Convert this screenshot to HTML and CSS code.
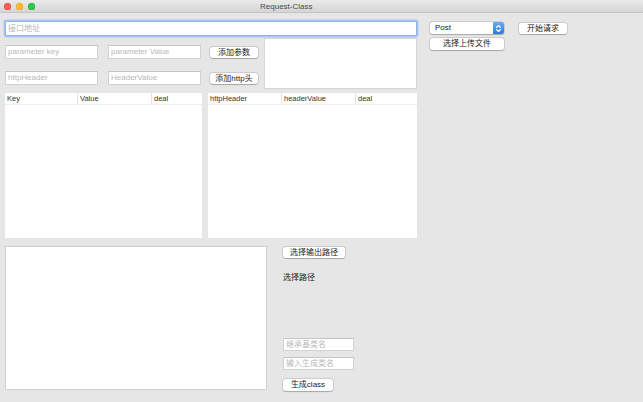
FILE: index.html
```html
<!DOCTYPE html>
<html lang="zh">
<head>
<meta charset="utf-8">
<title>Request-Class</title>
<link rel="stylesheet" href="styles.css">
</head>
<body>
<div class="window">
  <div class="titlebar">
    <div class="lights">
      <span class="light red"></span>
      <span class="light yellow"></span>
      <span class="light green"></span>
    </div>
    <div class="title">Request-Class</div>
  </div>
  <div class="content">
    <div class="left">
      <div class="url"><span class="ph">接口地址</span></div>
      <div class="form">
        <div class="field f-key"><span class="ph">parameter key</span></div>
        <div class="field f-val"><span class="ph">parameter Value</span></div>
        <div class="btn b-add">添加参数</div>
        <div class="textbox tb-top"></div>
        <div class="field f-hkey"><span class="ph">httpHeader</span></div>
        <div class="field f-hval"><span class="ph">HeaderValue</span></div>
        <div class="btn b-addh">添加http头</div>
      </div>
      <div class="tables">
        <div class="table t1">
          <div class="thead">
            <div class="th c1">Key</div>
            <div class="th c2">Value</div>
            <div class="th c3">deal</div>
          </div>
        </div>
        <div class="table t2">
          <div class="thead">
            <div class="th c1">httpHeader</div>
            <div class="th c2">headerValue</div>
            <div class="th c3">deal</div>
          </div>
        </div>
      </div>
      <div class="bottom">
        <div class="textbox tb-out"></div>
        <div class="side">
          <div class="btn b-path">选择输出路径</div>
          <div class="label">选择路径</div>
          <div class="field f-base"><span class="ph">继承基类名</span></div>
          <div class="field f-name"><span class="ph">输入生成类名</span></div>
          <div class="btn b-gen">生成class</div>
        </div>
      </div>
    </div>
    <div class="right">
      <div class="row-top">
        <div class="popup">
          <span class="popup-text">Post</span>
          <span class="stepper">
            <svg width="7" height="9" viewBox="0 0 7 9"><path d="M1.5 3.5 L3.5 1.5 L5.5 3.5 M1.5 5.5 L3.5 7.5 L5.5 5.5" fill="none" stroke="#fff" stroke-width="1.1" stroke-linecap="round" stroke-linejoin="round"/></svg>
          </span>
        </div>
        <div class="btn b-start">开始请求</div>
      </div>
      <div class="btn b-upload">选择上传文件</div>
    </div>
  </div>
</div>
</body>
</html>
```
FILE: styles.css
```css
* { box-sizing: border-box; }
html, body { margin: 0; padding: 0; }
body {
  width: 643px;
  height: 402px;
  overflow: hidden;
  background: #e6e6e6;
  font-family: "Liberation Sans", "Noto Sans CJK SC", sans-serif;
  font-size: 8px;
  color: #2b2b2b;
}
.window { width: 643px; height: 402px; background: #e6e6e6; }

.titlebar {
  height: 13px;
  display: flex;
  align-items: center;
  background: linear-gradient(#ebebeb, #d5d5d5);
  border-bottom: 1px solid #c4c4c4;
  position: relative;
}
.lights { display: flex; gap: 5px; padding-left: 4px; }
.light { width: 7px; height: 7px; border-radius: 50%; display: block; }
.red { background: #fc5f57; box-shadow: inset 0 0 0 0.5px #de4940; }
.yellow { background: #fdbc2e; box-shadow: inset 0 0 0 0.5px #dea123; }
.green { background: #33c748; box-shadow: inset 0 0 0 0.5px #27aa35; }
.title {
  margin-left: 225px;
  font-size: 8px;
  color: #4a4a4a;
  line-height: 13px;
}

.content { display: flex; padding-left: 5px; }
.left { width: 412px; display: flex; flex-direction: column; }
.right { margin-left: 13px; padding-top: 9px; display: flex; flex-direction: column; }

.ph { color: #b8b8b8; }

.url {
  margin-top: 8px;
  height: 15px;
  background: #fff;
  border: 1px solid #8db3ea;
  box-shadow: 0 0 0 1.5px #a8c6f1;
  border-radius: 1px;
  padding-left: 2px;
  line-height: 13px;
  font-size: 8px;
}

.form {
  margin-top: 2px;
  display: grid;
  grid-template-columns: 93px 10px 93px 9px 48px 6px 153px;
  grid-template-rows: 7px 14px 12px 14px 4px;
}
.field {
  background: #fff;
  border: 1px solid #d2d2d2;
  border-top-color: #c4c4c4;
  height: 14px;
  line-height: 12px;
  padding-left: 2px;
  font-size: 8px;
  white-space: nowrap;
  overflow: hidden;
}
.f-key { grid-column: 1; grid-row: 2; }
.f-val { grid-column: 3; grid-row: 2; }
.b-add { grid-column: 5; grid-row: 2; align-self: center; margin-top: 1px; }
.f-hkey { grid-column: 1; grid-row: 4; }
.f-hval { grid-column: 3; grid-row: 4; }
.b-addh { grid-column: 5; grid-row: 4; align-self: center; margin-top: 1px; }
.tb-top { grid-column: 7; grid-row: 1 / 6; }

.textbox {
  background: #fff;
  border: 1px solid #d6d6d6;
}

.btn {
  background: #fff;
  border-radius: 2.5px;
  box-shadow: 0 0 0 0.5px rgba(0,0,0,0.18), 0 0.5px 1px rgba(0,0,0,0.2);
  height: 11px;
  line-height: 11px;
  text-align: center;
  font-size: 8px;
  color: #222;
  white-space: nowrap;
}

.tables { margin-top: 4px; display: flex; gap: 6px; height: 145px; }
.table { background: #fff; height: 145px; }
.t1 { width: 197px; }
.t2 { width: 209px; }
.thead {
  display: flex;
  height: 12px;
  border-bottom: 1px solid #ececec;
}
.th {
  font-size: 7.5px;
  line-height: 12px;
  padding-left: 2px;
  color: #333;
  border-right: 1px solid #e2e2e2;
}
.th.c3 { border-right: none; flex: 1; }
.t1 .c1 { width: 73px; }
.t1 .c2 { width: 74px; }
.t2 .c1 { width: 74px; }
.t2 .c2 { width: 74px; }

.bottom { margin-top: 8px; display: flex; }
.tb-out { width: 262px; height: 144px; border-color: #d0d0d0; }
.side { margin-left: 16px; display: flex; flex-direction: column; align-items: flex-start; padding-top: 1px; }
.b-path { width: 62px; }
.label { margin-top: 15px; font-size: 8px; line-height: 10px; color: #222; }
.f-base { margin-top: 55px; width: 71px; height: 13px; line-height: 11px; }
.f-name { margin-top: 6px; width: 71px; height: 13px; line-height: 11px; }
.b-gen { margin-top: 9px; width: 50px; height: 12px; line-height: 12px; }

.row-top { display: flex; align-items: flex-start; }
.popup {
  width: 74px;
  height: 12px;
  background: #fff;
  border-radius: 2.5px;
  box-shadow: 0 0 0 0.5px rgba(0,0,0,0.18), 0 0.5px 1px rgba(0,0,0,0.2);
  display: flex;
  align-items: center;
  justify-content: space-between;
  position: relative;
}
.popup-text { padding-left: 5px; font-size: 8px; color: #222; line-height: 12px; }
.stepper {
  width: 11px;
  height: 12px;
  border-radius: 0 2.5px 2.5px 0;
  background: linear-gradient(#69acf8, #2c7ae6);
  display: flex;
  align-items: center;
  justify-content: center;
}
.stepper svg { display: block; }
.b-start { margin-left: 15px; margin-top: 1px; width: 48px; }
.b-upload { margin-top: 4px; width: 74px; height: 12px; line-height: 12px; }
```
